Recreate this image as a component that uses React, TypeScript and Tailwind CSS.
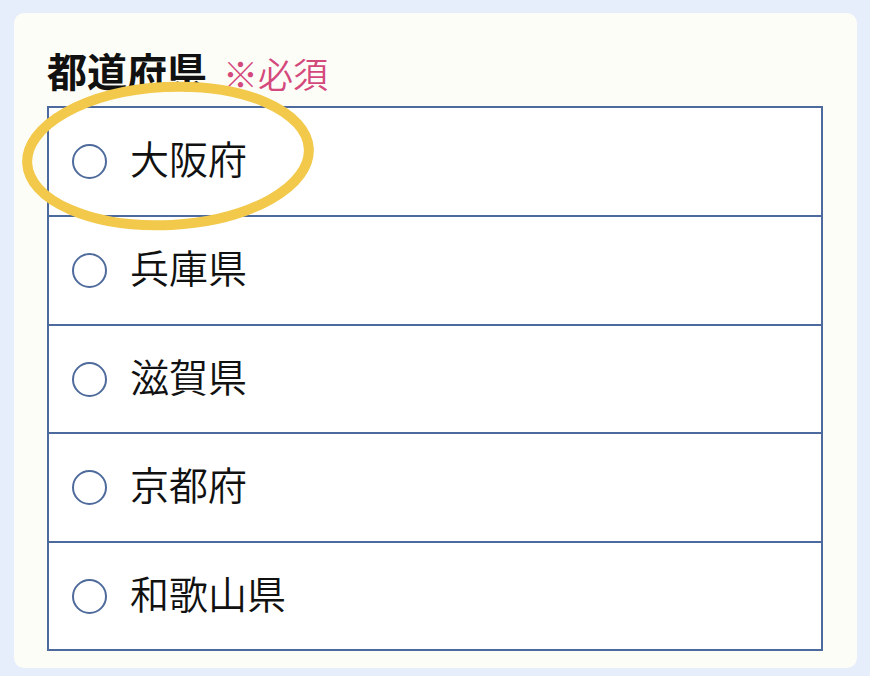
import React from "react";

const items = ["大阪府", "兵庫県", "滋賀県", "京都府", "和歌山県"];
const heights = ["h-[107px]", "h-[109px]", "h-[108px]", "h-[109px]", "h-[108px]"];

export default function App() {
  return (
    <div
      className="w-[870px] h-[676px] bg-[#e6edfb] pt-[13px] pl-[14px] pr-[13px] pb-[8px]"
      style={{ fontFamily: '"Noto Sans CJK JP", "Noto Sans", sans-serif' }}
    >
      <div className="relative w-[843px] h-[655px] rounded-[10px] bg-[#fdfdf8] pl-[33px] pr-[34px] pt-[36px]">
        <div className="flex items-end h-[41px] mb-[16px] leading-none">
          <span className="text-[40px] font-bold text-[#111] leading-none">都道府県</span>
          <span className="ml-[16px] text-[35px] font-[350] text-[#d4497c] leading-none">※必須</span>
        </div>
        <div className="border-2 border-[#4d6a9e] bg-white">
          {items.map((t, i) => (
            <div
              key={t}
              className={
                "flex items-center pl-[23px] " +
                heights[i] +
                (i > 0 ? " border-t-2 border-[#4d6a9e]" : "")
              }
            >
              <span className="w-[35px] h-[35px] rounded-full border-2 border-[#4f6b9c] bg-white shrink-0" />
              <span className="ml-[23px] mb-[8px] text-[39px] font-[350] text-[#111] leading-none">{t}</span>
            </div>
          ))}
        </div>
        <svg
          className="absolute left-0 top-0 pointer-events-none"
          width="843"
          height="655"
        >
          <ellipse cx="154" cy="143" rx="141" ry="69" fill="none" stroke="#f2c94b" strokeWidth="10" transform="rotate(-3 154 143)" />
        </svg>
      </div>
    </div>
  );
}
